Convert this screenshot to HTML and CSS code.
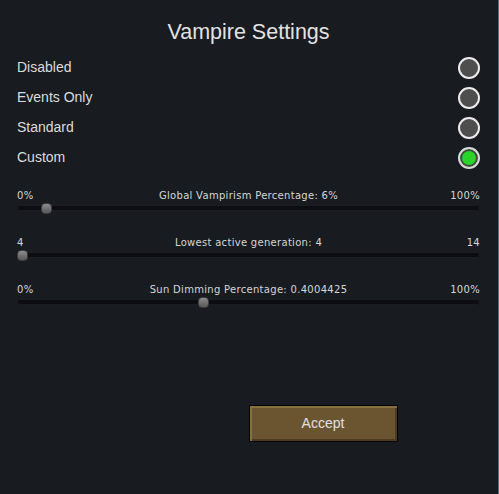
FILE: index.html
```html
<!DOCTYPE html>
<html lang="en">
<head>
    <meta charset="UTF-8">
    <meta name="viewport" content="width=device-width, initial-scale=1.0">
    <title>Vampire Settings</title>
    <link rel="stylesheet" href="styles.css">
</head>
<body>
    <div class="window">
        <h1 class="window-title">Vampire Settings</h1>

        <div class="mode-list">
            <div class="mode-row">
                <span>Disabled</span>
                <span class="radio"></span>
            </div>
            <div class="mode-row">
                <span>Events Only</span>
                <span class="radio"></span>
            </div>
            <div class="mode-row">
                <span>Standard</span>
                <span class="radio"></span>
            </div>
            <div class="mode-row">
                <span>Custom</span>
                <span class="radio checked"></span>
            </div>
        </div>

        <div class="slider-list">
            <div class="slider">
                <div class="slider-labels">
                    <span class="min">0%</span>
                    <span class="title">Global Vampirism Percentage: 6%</span>
                    <span class="max">100%</span>
                </div>
                <div class="track">
                    <div class="thumb" style="left: calc((100% - 11px) * 0.052)"></div>
                </div>
            </div>
            <div class="slider">
                <div class="slider-labels">
                    <span class="min">4</span>
                    <span class="title">Lowest active generation: 4</span>
                    <span class="max">14</span>
                </div>
                <div class="track">
                    <div class="thumb" style="left: 0"></div>
                </div>
            </div>
            <div class="slider">
                <div class="slider-labels">
                    <span class="min">0%</span>
                    <span class="title">Sun Dimming Percentage: 0.4004425</span>
                    <span class="max">100%</span>
                </div>
                <div class="track">
                    <div class="thumb" style="left: calc((100% - 11px) * 0.4004425)"></div>
                </div>
            </div>
        </div>

        <div class="footer">
            <div></div>
            <button class="accept-btn">Accept</button>
        </div>
    </div>
</body>
</html>
```

FILE: styles.css
```css
html, body {
    margin: 0;
    padding: 0;
    background: #181b20;
}
.window {
    box-sizing: border-box;
    width: 499px;
    height: 494px;
    padding: 20px 18px 0 17px;
    background: #181b20;
    border-right: 1px solid #5b6977;
    color: #dcdcdc;
    font-family: "Liberation Sans", Arial, sans-serif;
}
.window-title {
    margin: 0;
    font-size: 21.5px;
    font-weight: normal;
    line-height: 25px;
    text-align: center;
    color: #e2e2e2;
}
.mode-list {
    margin-top: 7px;
}
.mode-row {
    display: flex;
    align-items: center;
    justify-content: space-between;
    height: 30px;
    font-size: 14px;
    line-height: 16px;
}
.radio {
    box-sizing: border-box;
    width: 22px;
    height: 22px;
    margin-top: 1px;
    border: 2px solid #ececec;
    border-radius: 50%;
    background: #4e4e4e;
}
.radio.checked {
    border-color: #d8d8d8;
    background: #2ad42a;
    box-shadow: inset 0 0 0 2px #454545;
}
.slider-list {
    margin-top: 18px;
    display: flex;
    flex-direction: column;
    gap: 26px;
}
.slider-labels {
    display: grid;
    grid-template-columns: 1fr auto 1fr;
    font-family: "DejaVu Sans", sans-serif;
    font-size: 10px;
    line-height: 12px;
    letter-spacing: 0.3px;
    color: #d6d6d6;
}
.slider-labels .max {
    text-align: right;
}
.track {
    position: relative;
    height: 6px;
    margin-top: 3px;
    border-radius: 3px;
    background: #0b0d10;
    box-shadow: inset 0 0 0 1px #1a1d22;
}
.thumb {
    position: absolute;
    top: -2px;
    width: 11px;
    height: 11px;
    box-sizing: border-box;
    border-radius: 4px;
    border: 1px solid #3e3e3e;
    background: linear-gradient(#8d8d8d, #6e6e6e 55%, #5a5a5a);
}
.footer {
    display: grid;
    grid-template-columns: 1fr 1fr;
    margin-top: 100px;
}
.accept-btn {
    width: 149px;
    height: 37px;
    padding: 0 0 2px;
    border: 1px solid #050505;
    background: #6b5531;
    box-shadow: inset 2px 2px 0 #85703f, inset -2px -2px 0 #4b3b20;
    color: #e0e0e0;
    font-family: "Liberation Sans", Arial, sans-serif;
    font-size: 14px;
    cursor: pointer;
}
```
